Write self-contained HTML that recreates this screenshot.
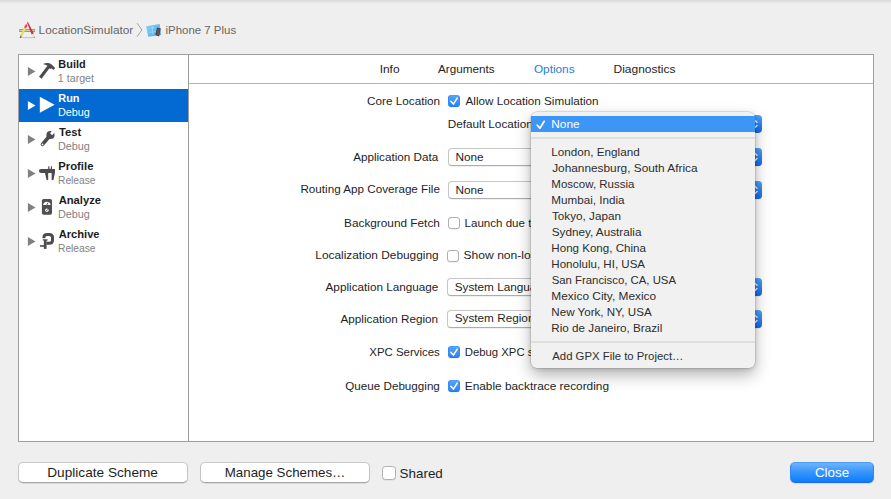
<!DOCTYPE html>
<html>
<head>
<meta charset="utf-8">
<title>Scheme Editor</title>
<style>
html,body{margin:0;padding:0;}
body{width:891px;height:499px;overflow:hidden;background:#efefef;font-family:"Liberation Sans",sans-serif;font-size:12px;color:#1e1e1e;position:relative;}
.abs{position:absolute;white-space:nowrap;}
#topshade{left:0;top:0;width:891px;height:4px;background:linear-gradient(#d8d8d8,#e5e5e5 50%,#efefef);}
.t{position:absolute;white-space:pre;line-height:16px;height:16px;transform-origin:0 0;}
#box{left:18px;top:54px;width:854px;height:386px;border:1px solid #9e9e9e;background:#fff;}
#sideb{left:188px;top:55px;width:1px;height:386px;background:#9e9e9e;}
#tabline{left:189px;top:83px;width:684px;height:1px;background:#b4b4b4;}
.tri{position:absolute;width:0;height:0;border-left:7.4px solid #808080;border-top:4.5px solid transparent;border-bottom:4.5px solid transparent;}
.cb{position:absolute;width:10px;height:10px;border:1px solid #b0b0b0;border-radius:3px;background:#fff;box-shadow:0 .5px .5px rgba(0,0,0,.10);}
.cb.on{border-color:#4a9cf8 #3489f4 #2578ee;background:linear-gradient(#52a3f9,#2b84f4);}
.cb svg{position:absolute;left:-1px;top:-1px;}
.pop{position:absolute;left:448px;width:312px;height:16px;border:1px solid #c6c6c6;border-bottom-color:#adadad;border-radius:4px;background:#fff;box-shadow:0 .5px .5px rgba(0,0,0,.12);}
.step{position:absolute;left:746px;width:16px;height:17.5px;border-radius:0 4px 4px 0;background:linear-gradient(#51a2f9,#1467e4);}
.step svg{position:absolute;left:0;top:0;}
.btn{position:absolute;height:18.5px;border:1px solid #c4c4c4;border-top-color:#cacaca;border-bottom-color:#a6a6a6;border-radius:5px;background:#fff;box-shadow:0 .5px .6px rgba(0,0,0,.18);}
#menu{left:531px;top:111.5px;width:224px;height:256.5px;border-radius:6px;background:#f1f1f1;box-shadow:0 0 0 .5px rgba(0,0,0,.16),0 7px 16px rgba(0,0,0,.30),0 1px 4px rgba(0,0,0,.14);}
#menu .sel{position:absolute;left:0;top:4.5px;width:224px;height:15.7px;background:#3b96f8;}
#menu .sep{position:absolute;left:0;width:224px;height:2px;background:#dfdfdf;}
</style>
</head>
<body>
<div class="abs" id="topshade"></div>

<!-- breadcrumb icons -->
<svg class="abs" style="left:18px;top:21px" width="19" height="18" viewBox="0 0 19 18">
  <ellipse cx="9.4" cy="16.6" rx="7.6" ry=".7" fill="#000" opacity=".16"/>
  <rect x="1.1" y="8" width="16" height="2.9" rx=".4" fill="#b98d63"/>
  <rect x="1.6" y="8.9" width="15" height="1" fill="#e4cfb1"/>
  <path d="M7.9 5.3 L2.9 15.4" stroke="#e4e060" stroke-width="2.3"/>
  <path d="M8.3 4.4 L7.5 6.1" stroke="#f0457c" stroke-width="2.3" stroke-linecap="round"/>
  <path d="M3.3 14.6 L2.3 16.6" stroke="#b38b5e" stroke-width="1.7"/>
  <path d="M2.5 16.1 L2.2 16.8" stroke="#333" stroke-width="1.1"/>
  <path d="M8.95 1.5 L9.95 1.0 L15.9 12.4 L13.6 13.4 Z" fill="#c23a4c"/>
  <path d="M13.6 13.4 L15.9 12.4 L16.6 16.8 Z" fill="#ecddd0"/>
  <path d="M16 15.8 L16.5 16.8" stroke="#a8734f" stroke-width="1.3"/>
</svg>
<svg class="abs" style="left:136px;top:22px" width="7" height="16" viewBox="0 0 7 16"><path d="M1.1 1.2 L5.9 7.9 L1.1 14.6" stroke="#a2a2a2" stroke-width="1" fill="none"/></svg>
<svg class="abs" style="left:145px;top:23px" width="18" height="15" viewBox="0 0 18 15">
  <defs><linearGradient id="bp" x1="0" y1="0" x2="1" y2="1"><stop offset="0" stop-color="#86d3f9"/><stop offset="1" stop-color="#4aa6ee"/></linearGradient></defs>
  <path d="M1.1 3.3 L14.7 1.1 L16.1 12.1 L3.2 13.8 Z" fill="url(#bp)"/>
  <path d="M6 5 L9 4.6 M7.4 3.6 L7.9 11.6 M4.4 9.4 L11 8.6" stroke="#c5ebfb" stroke-width=".6" opacity=".8"/>
  <path d="M12 4.6 L15.8 5.6 L14.1 13.5 L10.3 12.1 Z" fill="#4b4244"/>
  <path d="M12.6 5.8 L15 6.4 L13.7 12.3 L11.4 11.5 Z" fill="#6a5a58" opacity=".7"/>
</svg>

<!-- main box -->
<div class="abs" id="box"></div>
<div class="abs" id="sideb"></div>
<div class="abs" id="tabline"></div>

<!-- sidebar selection -->
<div class="abs" style="left:19px;top:89px;width:169px;height:32.5px;background:#026ad2"></div>

<!-- Build -->
<svg class="abs" style="left:27px;top:66.0px" width="10" height="11" viewBox="0 0 10 11"><path d="M.9 .9 L8.5 5.5 L.9 10.1 Z" fill="#808080"/></svg>
<svg class="abs" style="left:38px;top:61px" width="19" height="19" viewBox="0 0 19 19">
  <path d="M2.3 16.8 L10.9 5.4" stroke="#4c4c4c" stroke-width="3.2"/>
  <path d="M5.2 2.9 C7.6 1.6 11.2 1.7 13.3 3.3 L17.1 7 L15.5 9.1 L13.7 7.5 L11.9 8 L9.5 4.8 C8.1 3.8 6.6 3.5 5.2 2.9 Z" fill="#4c4c4c"/>
</svg>
<!-- Run -->
<svg class="abs" style="left:27px;top:100.0px" width="10" height="11" viewBox="0 0 10 11"><path d="M.9 .9 L8.5 5.5 L.9 10.1 Z" fill="#fff"/></svg>
<svg class="abs" style="left:39px;top:96px" width="17" height="18" viewBox="0 0 17 18"><path d="M.8 .8 L15.6 8.8 L.8 16.8 Z" fill="#fff"/></svg>
<!-- Test -->
<svg class="abs" style="left:27px;top:134.0px" width="10" height="11" viewBox="0 0 10 11"><path d="M.9 .9 L8.5 5.5 L.9 10.1 Z" fill="#808080"/></svg>
<svg class="abs" style="left:38px;top:129px" width="19" height="19" viewBox="0 0 19 19">
  <path d="M4.5 15.4 L11.4 7.2" stroke="#4c4c4c" stroke-width="3.7" stroke-linecap="round"/>
  <circle cx="12.5" cy="6" r="4.1" fill="#4c4c4c"/>
  <path d="M13.1 5.3 L17.4 .2" stroke="#fff" stroke-width="2.9"/>
  <circle cx="4.5" cy="15.4" r=".9" fill="#fff"/>
</svg>
<!-- Profile -->
<svg class="abs" style="left:27px;top:168.0px" width="10" height="11" viewBox="0 0 10 11"><path d="M.9 .9 L8.5 5.5 L.9 10.1 Z" fill="#808080"/></svg>
<svg class="abs" style="left:38px;top:163px" width="19" height="19" viewBox="0 0 19 19">
  <path d="M3 5.9 H17 V10 H3 A2.05 2.05 0 0 1 3 5.9 Z" fill="#4c4c4c"/>
  <path d="M6.8 9.6 H10.2 V16.9 L8.7 17.3 Z" fill="#4c4c4c"/>
  <path d="M13.6 9.6 H17 L15.4 17.3 L13.6 16.9 Z" fill="#4c4c4c"/>
  <path d="M10.2 3.2 H11.2 L11.6 6 H10.2 Z M13 3.2 H14 V6 H12.7 Z" fill="#4c4c4c"/>
</svg>
<!-- Analyze -->
<svg class="abs" style="left:27px;top:202.0px" width="10" height="11" viewBox="0 0 10 11"><path d="M.9 .9 L8.5 5.5 L.9 10.1 Z" fill="#808080"/></svg>
<svg class="abs" style="left:38px;top:197px" width="19" height="19" viewBox="0 0 19 19">
  <rect x="3.9" y="2" width="10.1" height="15.8" rx="1.7" fill="#505050"/>
  <path d="M5.1 8 C5.6 3.6 12.2 3.6 12.7 8 Z" fill="#fff"/>
  <path d="M8.6 8.2 L10 5.6" stroke="#505050" stroke-width=".9"/>
  <circle cx="8.9" cy="13.3" r="1.7" fill="#fff"/>
  <path d="M7.8 14.2 L10 12.4" stroke="#505050" stroke-width=".8"/>
</svg>
<!-- Archive -->
<svg class="abs" style="left:27px;top:236.0px" width="10" height="11" viewBox="0 0 10 11"><path d="M.9 .9 L8.5 5.5 L.9 10.1 Z" fill="#808080"/></svg>
<svg class="abs" style="left:38px;top:231px" width="19" height="19" viewBox="0 0 19 19">
  <path d="M5.9 7.2 V6.4 C5.9 4.2 7 3.5 9.4 3.5 H11.2 C13.6 3.5 14.5 4.4 14.5 6.6 V9.2 C14.5 11.6 13.4 12.3 11.2 12.3 H8.4" stroke="#4c4c4c" stroke-width="3" fill="none"/>
  <path d="M4.8 8.9 H9.6" stroke="#4c4c4c" stroke-width="1.2"/>
  <path d="M7.2 8.9 V17.9" stroke="#4c4c4c" stroke-width="2.7"/>
  <path d="M2 15 H7.2" stroke="#4c4c4c" stroke-width="1.6"/>
</svg>

<!-- controls -->
<div class="cb on" style="left:448px;top:95px"><svg width="12" height="12" viewBox="0 0 12 12"><path d="M2.8 6.3 L5.4 9.1 L9.2 3.1" stroke="#fff" stroke-width="1.5" fill="none" stroke-linecap="round" stroke-linejoin="round"/></svg></div>
<div class="step" style="top:115px"><svg width="16" height="18" viewBox="0 0 16 18"><path d="M5 7.2 L8 4.4 L11 7.2 M5 10.6 L8 13.4 L11 10.6" stroke="#fff" stroke-width="1.4" fill="none" stroke-linecap="round" stroke-linejoin="round"/></svg></div>

<div class="pop" style="top:148px"></div><div class="step" style="top:148.2px"><svg width="16" height="18" viewBox="0 0 16 18"><path d="M5 7.2 L8 4.4 L11 7.2 M5 10.6 L8 13.4 L11 10.6" stroke="#fff" stroke-width="1.4" fill="none" stroke-linecap="round" stroke-linejoin="round"/></svg></div>
<div class="pop" style="top:181px"></div><div class="step" style="top:181.2px"><svg width="16" height="18" viewBox="0 0 16 18"><path d="M5 7.2 L8 4.4 L11 7.2 M5 10.6 L8 13.4 L11 10.6" stroke="#fff" stroke-width="1.4" fill="none" stroke-linecap="round" stroke-linejoin="round"/></svg></div>

<div class="cb" style="left:448px;top:217px"></div>
<div class="cb" style="left:447px;top:250px"></div>

<div class="pop" style="top:278px;left:447px;width:313px"></div><div class="step" style="top:278.2px"><svg width="16" height="18" viewBox="0 0 16 18"><path d="M5 7.2 L8 4.4 L11 7.2 M5 10.6 L8 13.4 L11 10.6" stroke="#fff" stroke-width="1.4" fill="none" stroke-linecap="round" stroke-linejoin="round"/></svg></div>
<div class="pop" style="top:310px;left:447px;width:313px"></div><div class="step" style="top:310.2px"><svg width="16" height="18" viewBox="0 0 16 18"><path d="M5 7.2 L8 4.4 L11 7.2 M5 10.6 L8 13.4 L11 10.6" stroke="#fff" stroke-width="1.4" fill="none" stroke-linecap="round" stroke-linejoin="round"/></svg></div>

<div class="cb on" style="left:448px;top:346.4px"><svg width="12" height="12" viewBox="0 0 12 12"><path d="M2.8 6.3 L5.4 9.1 L9.2 3.1" stroke="#fff" stroke-width="1.5" fill="none" stroke-linecap="round" stroke-linejoin="round"/></svg></div>
<div class="cb on" style="left:448px;top:380.2px"><svg width="12" height="12" viewBox="0 0 12 12"><path d="M2.8 6.3 L5.4 9.1 L9.2 3.1" stroke="#fff" stroke-width="1.5" fill="none" stroke-linecap="round" stroke-linejoin="round"/></svg></div>

<!-- bottom buttons -->
<div class="btn" style="left:18px;top:462px;width:168px"></div>
<div class="btn" style="left:200px;top:462px;width:168px"></div>
<div class="cb" style="left:382px;top:466px;width:12px;height:12px;border-radius:3.5px"></div>
<div class="btn" style="left:790px;top:462px;width:82px;height:19px;border-color:#4f9cf6 #2f86f6 #1a6cf0;background:linear-gradient(#6db4fb,#3b97fb 45%,#0b7cff);box-shadow:0 .5px .5px rgba(0,0,0,.15)"></div>

<div class="t" style="left:38px;top:22px;font-size:11px;color:#666666;transform:translateX(0.62px) scaleX(1.0752);">LocationSimulator</div>
<div class="t" style="left:165px;top:22px;font-size:11px;color:#666666;transform:translateX(0.51px) scaleX(1.0405);">iPhone 7 Plus</div>
<div class="t" style="left:58px;top:56px;font-size:11px;color:#1c1c1c;transform:translateX(0.35px) scaleX(0.9916);font-weight:700;">Build</div>
<div class="t" style="left:57px;top:71px;font-size:10px;color:#828282;transform:translateX(0.87px) scaleX(1.0645);">1 target</div>
<div class="t" style="left:58px;top:90px;font-size:11px;color:#fff;transform:translateX(0.35px) scaleX(0.9882);font-weight:700;">Run</div>
<div class="t" style="left:57px;top:105px;font-size:10px;color:#fff;transform:translateX(0.92px) scaleX(1.0821);">Debug</div>
<div class="t" style="left:58px;top:124px;font-size:11px;color:#1c1c1c;transform:translateX(0.99px) scaleX(1.0153);font-weight:700;">Test</div>
<div class="t" style="left:57px;top:139px;font-size:10px;color:#828282;transform:translateX(0.92px) scaleX(1.0821);">Debug</div>
<div class="t" style="left:58px;top:158px;font-size:11px;color:#1c1c1c;transform:translateX(0.32px) scaleX(1.0251);font-weight:700;">Profile</div>
<div class="t" style="left:57px;top:173px;font-size:10px;color:#828282;transform:translateX(0.98px) scaleX(1.0242);">Release</div>
<div class="t" style="left:58px;top:192px;font-size:11px;color:#1c1c1c;transform:translateX(0.63px) scaleX(1.0216);font-weight:700;">Analyze</div>
<div class="t" style="left:57px;top:207px;font-size:10px;color:#828282;transform:translateX(0.92px) scaleX(1.0821);">Debug</div>
<div class="t" style="left:58px;top:226px;font-size:11px;color:#1c1c1c;transform:translateX(0.63px) scaleX(1.0141);font-weight:700;">Archive</div>
<div class="t" style="left:57px;top:241px;font-size:10px;color:#828282;transform:translateX(0.98px) scaleX(1.0242);">Release</div>
<div class="t" style="left:379px;top:61px;font-size:11px;color:#1e1e1e;transform:translateX(0.67px) scaleX(1.0835);">Info</div>
<div class="t" style="left:438px;top:61px;font-size:11px;color:#1e1e1e;transform:translateX(0.05px) scaleX(1.0634);">Arguments</div>
<div class="t" style="left:533px;top:61px;font-size:11px;color:#2581d6;transform:translateX(0.90px) scaleX(1.0730);">Options</div>
<div class="t" style="left:613px;top:61px;font-size:11px;color:#1e1e1e;transform:translateX(0.51px) scaleX(1.0885);">Diagnostics</div>
<div class="t" style="left:367px;top:93px;font-size:11px;color:#1e1e1e;transform:translateX(0.03px) scaleX(1.0667);">Core Location</div>
<div class="t" style="left:353px;top:149px;font-size:11px;color:#1e1e1e;transform:translateX(0.15px) scaleX(1.0619);">Application Data</div>
<div class="t" style="left:300px;top:181px;font-size:11px;color:#1e1e1e;transform:translateX(0.44px) scaleX(1.0608);">Routing App Coverage File</div>
<div class="t" style="left:344px;top:215px;font-size:11px;color:#1e1e1e;transform:translateX(0.03px) scaleX(1.0735);">Background Fetch</div>
<div class="t" style="left:315px;top:247px;font-size:11px;color:#1e1e1e;transform:translateX(0.32px) scaleX(1.0782);">Localization Debugging</div>
<div class="t" style="left:325px;top:279px;font-size:11px;color:#1e1e1e;transform:translateX(0.55px) scaleX(1.0664);">Application Language</div>
<div class="t" style="left:340px;top:311px;font-size:11px;color:#1e1e1e;transform:translateX(0.55px) scaleX(1.0630);">Application Region</div>
<div class="t" style="left:369px;top:344px;font-size:11px;color:#1e1e1e;transform:translateX(0.25px) scaleX(1.0393);">XPC Services</div>
<div class="t" style="left:345px;top:378px;font-size:11px;color:#1e1e1e;transform:translateX(0.31px) scaleX(1.0587);">Queue Debugging</div>
<div class="t" style="left:465px;top:93px;font-size:11px;color:#1e1e1e;transform:translateX(0.55px) scaleX(1.0609);">Allow Location Simulation</div>
<div class="t" style="left:447px;top:116px;font-size:11px;color:#1e1e1e;transform:translateX(0.68px) scaleX(1.0710);">Default Location</div>
<div class="t" style="left:455px;top:149px;font-size:11px;color:#1e1e1e;transform:translateX(0.43px) scaleX(1.0720);">None</div>
<div class="t" style="left:455px;top:182px;font-size:11px;color:#1e1e1e;transform:translateX(0.43px) scaleX(1.0720);">None</div>
<div class="t" style="left:464px;top:215px;font-size:11px;color:#1e1e1e;transform:translateX(0.55px) scaleX(1.0500);">Launch due to a background fetch event</div>
<div class="t" style="left:463px;top:247px;font-size:11px;color:#1e1e1e;transform:translateX(0.57px) scaleX(1.0978);">Show non-localized strings</div>
<div class="t" style="left:454px;top:279px;font-size:11px;color:#1e1e1e;transform:translateX(0.69px) scaleX(1.0690);">System Language</div>
<div class="t" style="left:454px;top:310px;font-size:11px;color:#1e1e1e;transform:translateX(0.69px) scaleX(1.0690);">System Region</div>
<div class="t" style="left:464px;top:344px;font-size:11px;color:#1e1e1e;transform:translateX(0.77px) scaleX(1.0294);">Debug XPC services used by this application</div>
<div class="t" style="left:464px;top:378px;font-size:11px;color:#1e1e1e;transform:translateX(0.72px) scaleX(1.0776);">Enable backtrace recording</div>
<div class="t" style="left:47px;top:465px;font-size:13px;color:#1e1e1e;transform:translateX(0.25px) scaleX(1.0490);">Duplicate Scheme</div>
<div class="t" style="left:224px;top:465px;font-size:13px;color:#1e1e1e;transform:translateX(0.78px) scaleX(1.0243);">Manage Schemes…</div>
<div class="t" style="left:399px;top:466px;font-size:13px;color:#1e1e1e;transform:translateX(0.57px) scaleX(1.0316);">Shared</div>
<div class="t" style="left:814px;top:465px;font-size:13px;color:#fff;transform:translateX(0.88px) scaleX(1.0314);">Close</div>

<!-- popup menu -->
<div class="abs" id="menu">
  <div class="sel"></div>
  <svg class="abs" style="left:5px;top:7px" width="11" height="11" viewBox="0 0 11 11"><path d="M1.2 6.1 L3.9 9.2 L8.2 2.3" stroke="#fff" stroke-width="1.7" fill="none" stroke-linecap="round" stroke-linejoin="round"/></svg>
  <div class="sep" style="top:25.4px"></div>
  <div class="sep" style="top:229.3px"></div>
</div>
<div class="t" style="left:551px;top:116px;font-size:11px;color:#fff;transform:translateX(0.32px) scaleX(1.0760);">None</div>
<div class="t" style="left:551px;top:144px;font-size:11px;color:#2d2d2d;transform:translateX(0.34px) scaleX(1.0614);">London, England</div>
<div class="t" style="left:552px;top:160px;font-size:11px;color:#2d2d2d;transform:translateX(0.17px) scaleX(1.0758);">Johannesburg, South Africa</div>
<div class="t" style="left:551px;top:176px;font-size:11px;color:#2d2d2d;transform:translateX(0.36px) scaleX(1.0450);">Moscow, Russia</div>
<div class="t" style="left:551px;top:192px;font-size:11px;color:#2d2d2d;transform:translateX(0.34px) scaleX(1.0588);">Mumbai, India</div>
<div class="t" style="left:552px;top:208px;font-size:11px;color:#2d2d2d;transform:translateX(0.02px) scaleX(1.0626);">Tokyo, Japan</div>
<div class="t" style="left:551px;top:224px;font-size:11px;color:#2d2d2d;transform:translateX(0.69px) scaleX(1.0668);">Sydney, Australia</div>
<div class="t" style="left:551px;top:240px;font-size:11px;color:#2d2d2d;transform:translateX(0.35px) scaleX(1.0514);">Hong Kong, China</div>
<div class="t" style="left:551px;top:256px;font-size:11px;color:#2d2d2d;transform:translateX(0.35px) scaleX(1.0495);">Honolulu, HI, USA</div>
<div class="t" style="left:551px;top:272px;font-size:11px;color:#2d2d2d;transform:translateX(0.71px) scaleX(1.0321);">San Francisco, CA, USA</div>
<div class="t" style="left:551px;top:288px;font-size:11px;color:#2d2d2d;transform:translateX(0.32px) scaleX(1.0813);">Mexico City, Mexico</div>
<div class="t" style="left:551px;top:304px;font-size:11px;color:#2d2d2d;transform:translateX(0.35px) scaleX(1.0535);">New York, NY, USA</div>
<div class="t" style="left:551px;top:320px;font-size:11px;color:#2d2d2d;transform:translateX(0.34px) scaleX(1.0606);">Rio de Janeiro, Brazil</div>
<div class="t" style="left:552px;top:348px;font-size:11px;color:#2d2d2d;transform:translateX(0.26px) scaleX(1.0312);">Add GPX File to Project…</div>

</body>
</html>
